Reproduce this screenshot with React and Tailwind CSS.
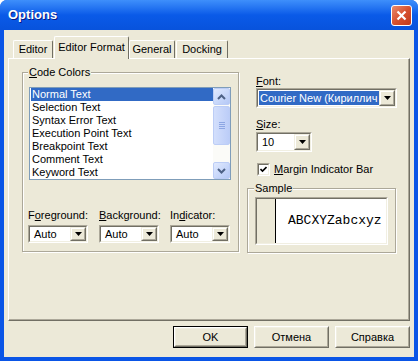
import React from 'react';

const items = [
  'Normal Text',
  'Selection Text',
  'Syntax Error Text',
  'Execution Point Text',
  'Breakpoint Text',
  'Comment Text',
  'Keyword Text',
];

const Arrow = () => (
  <svg width="7" height="4" viewBox="0 0 7 4">
    <path d="M0 0h7L3.5 4z" fill="#000" />
  </svg>
);

const DropBtn = () => (
  <div className="w-[16px] shrink-0 h-full border border-t-[#f1efe2] border-l-[#f1efe2] border-r-[#716f64] border-b-[#716f64] bg-[#ece9d8]">
    <div className="w-full h-full border border-t-white border-l-white border-r-[#aca899] border-b-[#aca899] flex items-center justify-center">
      <Arrow />
    </div>
  </div>
);

const Combo = ({ text, className, selected }) => (
  <div className={`flex border border-t-[#aca899] border-l-[#aca899] border-r-white border-b-white ${className}`}>
    <div className="flex flex-1 min-w-0 border border-t-[#716f64] border-l-[#716f64] border-r-[#f1efe2] border-b-[#f1efe2] bg-white">
      <div className="flex-1 min-w-0 flex items-center pl-[1px] py-[1px] overflow-hidden whitespace-nowrap">
        <span className={selected ? 'flex-1 h-full flex items-center bg-[#316ac5] text-white pl-[1px]' : 'pl-[3px]'}>{text}</span>
      </div>
      <DropBtn />
    </div>
  </div>
);

const ScrollBtn = ({ up }) => (
  <div className="h-[17px] w-[17px] rounded-[2px] border border-[#bccdf6] bg-gradient-to-br from-[#e1eafe] to-[#b4c8f6] flex items-center justify-center">
    <svg width="9" height="6" viewBox="0 0 9 6">
      <path d={up ? 'M1 5L4.5 1.5L8 5' : 'M1 1L4.5 4.5L8 1'} stroke="#4d6185" strokeWidth="2" fill="none" />
    </svg>
  </div>
);

const Group = ({ label, children, className }) => (
  <fieldset className={`border border-[#aca899] shadow-[inset_1px_1px_0_#fff,1px_1px_0_#fff] ${className}`}>
    <legend className="-ml-[1px] px-[1px] bg-[#ece9d8] leading-[13px]">{label}</legend>
    {children}
  </fieldset>
);

const Btn = ({ children, primary }) => (
  <div className={`w-[75px] h-[22px] ${primary ? 'border border-black' : ''}`}>
    <div className="w-full h-full border border-t-white border-l-white border-r-[#716f64] border-b-[#716f64] bg-[#ece9d8]">
      <div className="w-full h-full border border-t-[#f1efe2] border-l-[#f1efe2] border-r-[#aca899] border-b-[#aca899] flex items-center justify-center">
        {children}
      </div>
    </div>
  </div>
);

const Tab = ({ children, w, active }) => (
  <div
    className={`${w} flex items-center justify-center border-t border-l border-r border-t-white border-l-white border-r-[#716f64] rounded-t-[2px] bg-[#ece9d8] ${
      active ? 'h-[23px] -mb-[1px] relative z-10 pb-[2px]' : 'h-[18px]'
    }`}
  >
    {children}
  </div>
);

export default function App() {
  return (
    <div className="w-[418px] h-[361px] flex flex-col bg-[#0a55e6] rounded-t-[7px] font-['Liberation_Sans',Arial,sans-serif] text-[11px] text-black overflow-hidden">
      {/* Title bar */}
      <div className="h-[30px] shrink-0 flex items-center justify-between pl-[8px] pr-[6px] bg-gradient-to-b from-[#3e8ffb] via-[#0a5ae8] to-[#0853dc]">
        <span className="text-white font-bold text-[13px] [text-shadow:1px_1px_0_#0a1883]">Options</span>
        <div className="w-[21px] h-[21px] rounded-[3px] border border-white bg-gradient-to-br from-[#e88a6c] via-[#d7512f] to-[#c0391a] flex items-center justify-center">
          <svg width="11" height="11" viewBox="0 0 11 11">
            <path d="M1.5 1.5L9.5 9.5M9.5 1.5L1.5 9.5" stroke="#fff" strokeWidth="2.2" />
          </svg>
        </div>
      </div>

      {/* Body */}
      <div className="flex-1 mx-[4px] mb-[4px] bg-[#ece9d8] flex flex-col">
        <div className="flex items-end pl-[9px] pt-[6px]">
          <Tab w="w-[40px]">Editor</Tab>
          <div className="ml-[1px]">
            <Tab w="w-[75px]" active>Editor Format</Tab>
          </div>
          <Tab w="w-[46px]">General</Tab>
          <div className="ml-[1px]">
            <Tab w="w-[52px]">Docking</Tab>
          </div>
        </div>

        <div className="ml-[4px] w-[402px] h-[263px] border border-t-white border-l-white border-r-[#716f64] border-b-[#716f64]">
          <div className="w-full h-full border-r border-b border-r-[#aca899] border-b-[#aca899] flex pl-[13px]">
            {/* Code Colors */}
            <Group label={<span><u>C</u>ode Colors</span>} className="mt-[7px] w-[217px] h-[186px] pl-[6px] pt-[8px]">
              <div className="w-[202px] h-[93px] border border-[#7f9db9] bg-white flex">
                <div className="flex-1 min-w-0 pl-[1px]">
                  {items.map((t, i) => (
                    <div
                      key={t}
                      className={`h-[13px] leading-[13px] pl-[1px] whitespace-nowrap ${i === 0 ? 'bg-[#316ac5] text-white' : ''}`}
                    >
                      {t}
                    </div>
                  ))}
                </div>
                <div className="w-[17px] flex flex-col bg-[#fbfbf8]">
                  <ScrollBtn up />
                  <div className="flex-1 pt-[1px]">
                    <div className="h-[39px] rounded-[2px] border border-[#bccdf6] bg-gradient-to-r from-[#d3dffc] to-[#bccdf8] flex flex-col items-center justify-center gap-[1px]">
                      <div className="w-[6px] h-[1px] bg-[#8da6e3]" />
                      <div className="w-[6px] h-[1px] bg-[#8da6e3]" />
                      <div className="w-[6px] h-[1px] bg-[#8da6e3]" />
                      <div className="w-[6px] h-[1px] bg-[#8da6e3]" />
                    </div>
                  </div>
                  <ScrollBtn />
                </div>
              </div>
              <div className="flex gap-[11px] -ml-[1px] mt-[29px]">
                <div className="w-[60px]">
                  <div className="leading-[13px]">F<u>o</u>reground:</div>
                  <Combo text="Auto" className="mt-[3px] h-[18px]" />
                </div>
                <div className="w-[60px]">
                  <div className="leading-[13px]"><u>B</u>ackground:</div>
                  <Combo text="Auto" className="mt-[3px] h-[18px]" />
                </div>
                <div className="w-[60px]">
                  <div className="leading-[13px]">In<u>d</u>icator:</div>
                  <Combo text="Auto" className="mt-[3px] h-[18px]" />
                </div>
              </div>
            </Group>

            {/* Right column */}
            <div className="ml-[8px] w-[150px] flex flex-col">
              <div className="pl-[9px] mt-[16px] leading-[13px]"><u>F</u>ont:</div>
              <Combo text="Courier New (Кириллич" selected className="ml-[9px] w-[141px] h-[20px]" />
              <div className="pl-[9px] mt-[10px] leading-[13px]"><u>S</u>ize:</div>
              <Combo text="10" className="ml-[9px] w-[56px] h-[20px] mt-[1px]" />
              <div className="ml-[10px] mt-[11px] flex items-center h-[13px]">
                <div className="w-[13px] h-[13px] border border-t-[#aca899] border-l-[#aca899] border-r-white border-b-white">
                  <div className="w-full h-full border border-t-[#716f64] border-l-[#716f64] border-r-[#f1efe2] border-b-[#f1efe2] bg-white flex items-center justify-center">
                    <svg width="7" height="7" viewBox="0 0 7 7">
                      <path d="M0.5 3L2.5 5L6.5 1" stroke="#000" strokeWidth="1.6" fill="none" />
                    </svg>
                  </div>
                </div>
                <span className="ml-[4px]"><u>M</u>argin Indicator Bar</span>
              </div>
              <Group label="Sample" className="mt-[6px] w-[149px] h-[71px] pl-[7px] pt-[2px]">
                <div className="w-[133px] h-[48px] border border-t-[#aca899] border-l-[#aca899] border-r-white border-b-white">
                  <div className="w-full h-full border border-t-[#716f64] border-l-[#716f64] border-r-[#f1efe2] border-b-[#f1efe2] flex">
                    <div className="w-[19px] bg-[#ece9d8] border-r border-r-black" />
                    <div className="flex-1 bg-white flex items-center pl-[12px] font-['Liberation_Mono','Courier_New',monospace] text-[13px]">
                      ABCXYZabcxyz
                    </div>
                  </div>
                </div>
              </Group>
            </div>
          </div>
        </div>

        {/* Buttons */}
        <div className="flex justify-end gap-[6px] pr-[4px] mt-[5px]">
          <Btn primary>OK</Btn>
          <Btn>Отмена</Btn>
          <Btn>Справка</Btn>
        </div>
      </div>
    </div>
  );
}
